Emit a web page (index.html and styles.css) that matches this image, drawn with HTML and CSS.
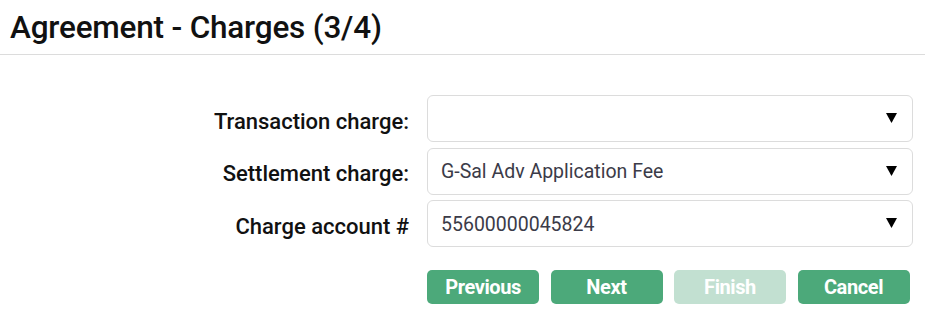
FILE: index.html
```html
<!DOCTYPE html>
<html lang="en">
<head>
<meta charset="utf-8">
<title>Agreement - Charges (3/4)</title>
<link rel="stylesheet" href="styles.css">
</head>
<body>
<header class="page-header">
  <h1 class="page-title">Agreement - Charges (3/4)</h1>
</header>
<main class="form">
  <label class="form-label">Transaction charge:</label>
  <div class="select"><span class="select-value"></span><svg class="select-arrow" width="11" height="10" viewBox="0 0 11 10"><polygon points="0,0 11,0 5.5,10" fill="#000"/></svg></div>

  <label class="form-label">Settlement charge:</label>
  <div class="select"><span class="select-value">G-Sal Adv Application Fee</span><svg class="select-arrow" width="11" height="10" viewBox="0 0 11 10"><polygon points="0,0 11,0 5.5,10" fill="#000"/></svg></div>

  <label class="form-label">Charge account #</label>
  <div class="select"><span class="select-value">55600000045824</span><svg class="select-arrow" width="11" height="10" viewBox="0 0 11 10"><polygon points="0,0 11,0 5.5,10" fill="#000"/></svg></div>

  <div class="actions">
    <button class="btn">Previous</button>
    <button class="btn">Next</button>
    <button class="btn btn-disabled" disabled>Finish</button>
    <button class="btn">Cancel</button>
  </div>
</main>
</body>
</html>
```

FILE: styles.css
```css
* { box-sizing: border-box; }
body {
  margin: 0;
  font-family: Roboto, "Liberation Sans", sans-serif;
  background: #fff;
  color: #111;
}
.page-header {
  height: 55px;
  border-bottom: 1px solid #dcdcdc;
  padding-left: 10px;
  display: flex;
  align-items: center;
}
.page-title {
  margin: 0;
  font-size: 31.5px;
  font-weight: 500;
  color: #111;
  letter-spacing: -0.2px;
}
.form {
  display: grid;
  grid-template-columns: 1fr 486px;
  column-gap: 18px;
  row-gap: 5.5px;
  padding: 40px 12px 0 0;
  align-items: center;
}
.form-label {
  text-align: right;
  font-size: 22px;
  font-weight: 500;
  color: #111;
  padding-top: 5px;
}
.select {
  height: 47px;
  border: 1px solid #dcdcdc;
  border-radius: 6px;
  display: flex;
  align-items: center;
  justify-content: space-between;
  padding: 1px 15px 0 13px;
  font-size: 19.5px;
  color: #3b3b48;
}
.select-arrow { display: block; margin-top: -2px; }
.actions {
  grid-column: 2;
  display: flex;
  gap: 11.5px;
  margin-top: 17.5px;
}
.btn {
  width: 112px;
  height: 34px;
  border: 0;
  border-radius: 5px;
  background: #4ca97a;
  color: #fff;
  font-family: inherit;
  font-size: 20px;
  font-weight: 700;
  padding: 0;
  letter-spacing: -0.4px;
}
.btn-disabled { background: #c2e0d1; }
```
